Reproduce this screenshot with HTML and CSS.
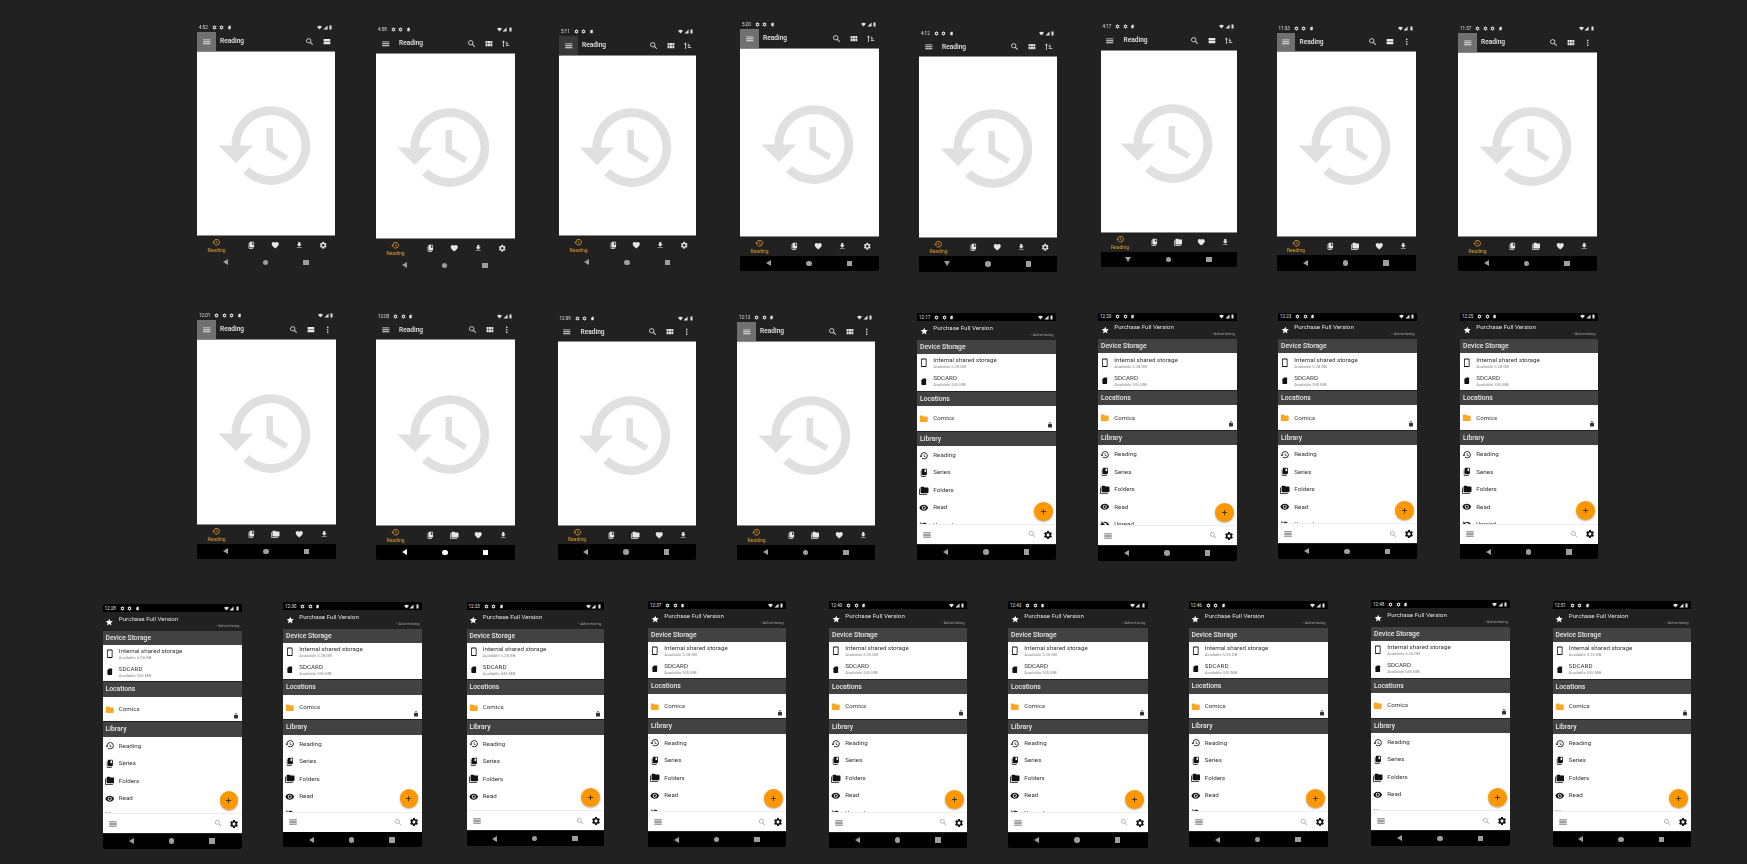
FILE: index.html
```html
<!DOCTYPE html>
<html lang="en">
<head>
  <meta charset="UTF-8">
  <title>App screens</title>
  <link rel="stylesheet" href="styles.css">
</head>
<body>

  <div class="board" id="board"></div>

  <script>
    const icons = {
      history: "M13 3c-4.97 0-9 4.03-9 9H1l3.89 3.89.07.14L9 12H6c0-3.87 3.13-7 7-7s7 3.13 7 7-3.13 7-7 7c-1.93 0-3.68-.79-4.94-2.06l-1.42 1.42C8.27 19.99 10.51 21 13 21c4.97 0 9-4.03 9-9s-4.03-9-9-9zm-1 5v5l4.28 2.54.72-1.21-3.5-2.08V8H12z",
      menu: "M3 18h18v-2H3v2zm0-5h18v-2H3v2zm0-7v2h18V6H3z",
      search: "M15.5 14h-.79l-.28-.27C15.41 12.59 16 11.11 16 9.5 16 5.91 13.09 3 9.5 3S3 5.91 3 9.5 5.91 16 9.5 16c1.61 0 3.09-.59 4.23-1.57l.27.28v.79l5 4.99L20.49 19l-4.99-5zm-6 0C7.01 14 5 11.99 5 9.5S7.01 5 9.5 5 14 7.01 14 9.5 11.99 14 9.5 14z",
      stream: "M4 18h17v-6H4v6zM4 5v6h17V5H4z",
      module: "M4 11h5V5H4v6zm0 7h5v-6H4v6zm6 0h5v-6h-5v6zm6 0h5v-6h-5v6zm-6-7h5V5h-5v6zm6-6v6h5V5h-5z",
      sort: "M6 4l3.5 4H7v12H5V8H2.500zM12 7h4v2h-4zM12 11h6v2h-6zM12 15h9v2h-9z",
      more: "M12 8c1.100 0 2-.9 2-2s-.9-2-2-2-2 .9-2 2 .9 2 2 2zm0 2c-1.100 0-2 .9-2 2s.9 2 2 2 2-.9 2-2-.9-2-2-2zm0 6c-1.100 0-2 .9-2 2s.9 2 2 2 2-.9 2-2-.9-2-2-2z",
      heart: "M12 21.350l-1.450-1.320C5.400 15.360 2 12.280 2 8.500 2 5.420 4.420 3 7.500 3c1.740 0 3.410.81 4.500 2.090C13.090 3.810 14.760 3 16.500 3 19.580 3 22 5.420 22 8.500c0 3.780-3.400 6.860-8.550 11.540L12 21.350z",
      download: "M19 9h-4V3H9v6H5l7 7 7-7zM5 18v2h14v-2H5z",
      gear: "M19.140 12.940c.04-.3.06-.61.06-.94 0-.32-.02-.64-.07-.94l2.030-1.580c.18-.14.23-.41.12-.61l-1.920-3.320c-.12-.22-.37-.29-.59-.22l-2.390.96c-.5-.38-1.030-.7-1.620-.94l-.36-2.540c-.04-.24-.24-.41-.48-.41h-3.840c-.24 0-.43.17-.47.41l-.36 2.540c-.59.24-1.130.57-1.620.94l-2.390-.96c-.22-.08-.47 0-.59.22L2.740 8.870c-.12.21-.08.47.12.61l2.030 1.580c-.05.3-.09.63-.09.94s.02.64.07.94l-2.030 1.580c-.18.14-.23.41-.12.61l1.920 3.320c.12.22.37.29.59.22l2.390-.96c.5.38 1.030.7 1.620.94l.36 2.540c.05.24.24.41.48.41h3.840c.24 0 .44-.17.47-.41l.36-2.540c.59-.24 1.130-.56 1.620-.94l2.390.96c.22.08.47 0 .59-.22l1.920-3.320c.12-.22.07-.47-.12-.61l-2.010-1.580zM12 15.600c-1.980 0-3.600-1.620-3.600-3.600s1.620-3.600 3.600-3.600 3.600 1.620 3.600 3.600-1.620 3.600-3.600 3.600z",
      book: "M6 6H4.500v14c0 1.100.9 2 2 2H17v-2H6V6zM18 2H9c-1.100 0-2 .9-2 2v12c0 1.100.9 2 2 2h9c1.100 0 2-.9 2-2V4c0-1.100-.9-2-2-2zm0 9l-2-1.200L14 11V4h4v7z",
      folders: "M2 6H0v5h.01L0 20c0 1.100.9 2 2 2h18v-2H2V6zm20-2h-8l-2-2H6c-1.100 0-1.990.9-1.990 2L4 16c0 1.100.9 2 2 2h16c1.100 0 2-.9 2-2V6c0-1.100-.9-2-2-2z",
      folder: "M10 4H4c-1.100 0-1.990.9-1.990 2L2 18c0 1.100.9 2 2 2h16c1.100 0 2-.9 2-2V8c0-1.100-.9-2-2-2h-8l-2-2z",
      eye: "M12 4.500C7 4.500 2.730 7.610 1 12c1.730 4.390 6 7.500 11 7.500s9.270-3.110 11-7.500c-1.730-4.390-6-7.500-11-7.500zM12 17c-2.760 0-5-2.240-5-5s2.240-5 5-5 5 2.240 5 5-2.240 5-5 5zm0-8c-1.660 0-3 1.340-3 3s1.340 3 3 3 3-1.340 3-3-1.340-3-3-3z",
      eyeoff: "M12 7c2.760 0 5 2.240 5 5 0 .65-.13 1.260-.36 1.830l2.920 2.920c1.510-1.260 2.700-2.890 3.430-4.750-1.730-4.390-6-7.500-11-7.500-1.400 0-2.740.25-3.980.7l2.160 2.160C10.740 7.130 11.350 7 12 7zM2 4.270l2.280 2.280.46.46C3.080 8.300 1.780 10.020 1 12c1.730 4.390 6 7.500 11 7.500 1.550 0 3.030-.3 4.380-.84l.42.42L19.730 22 21 20.730 3.270 3 2 4.270z",
      phone: "M17 1.010L7 1c-1.100 0-2 .9-2 2v18c0 1.100.9 2 2 2h10c1.100 0 2-.9 2-2V3c0-1.100-.9-1.990-2-1.990zM17 20H7V4h10v16z",
      sd: "M16.500 4H10L6 8.500V18.500c0 .8.7 1.500 1.500 1.500h9c.8 0 1.500-.7 1.500-1.500V5.500c0-.8-.7-1.500-1.500-1.500z",
      star: "M12 17.270L18.180 21l-1.640-7.030L22 9.240l-7.190-.61L12 2 9.190 8.630 2 9.240l5.460 4.730L5.820 21z",
      add: "M19 13h-6v6h-2v-6H5v-2h6V5h2v6h6v2z",
      lock: "M18 8h-1V6c0-2.760-2.240-5-5-5S7 3.240 7 6v2H6c-1.100 0-2 .9-2 2v10c0 1.100.9 2 2 2h12c1.100 0 2-.9 2-2V10c0-1.100-.9-2-2-2zm-2.900 0H8.900V6c0-1.710 1.390-3.100 3.100-3.100 1.710 0 3.100 1.390 3.100 3.100v2z",
      wifi: "M12 21L0 8c7-6 17-6 24 0z",
      signal: "M2 22h20V2z",
      battery: "M7 2h10v20H7z"
    };

    // x, y, width, height, clock, view icon, third icon, 5th tab layout, menu highlight, nav look
    const readingScreens = [
      [197, 23, 138, 247, "4:52", "stream", null, "old", "hi", "dark"],
      [376, 25, 138.500, 248, "4:58", "module", "sort", "old", "", "dark"],
      [559, 27, 137, 243, "5:11", "module", "sort", "old", "lo", "dark"],
      [740, 20, 139, 251, "5:20", "module", "sort", "old", "hi", "black"],
      [919, 28.500, 138, 243, "4:12", "module", "sort", "old", "", "black down"],
      [1100.500, 22, 136.500, 245, "4:17", "stream", "sort", "new", "", "black down"],
      [1276.500, 23.500, 139, 247, "11:53", "stream", "more", "new", "hi", "black"],
      [1458, 24, 138.500, 247, "11:57", "module", "more", "new", "hi", "black"],
      [197, 311, 139, 248, "12:01", "stream", "more", "new", "hi", "black"],
      [376, 311.500, 139, 248.500, "12:05", "module", "more", "new", "", "black bright"],
      [557.500, 313.500, 138, 246, "12:09", "module", "more", "new", "", "black"],
      [737, 313, 138, 247, "12:13", "module", "more", "new", "hi", "black"]
    ];

    // x, y, width, height, clock, free space
    const drawerScreens = [
      [917, 313.300, 139, 246.400, "12:17", "5.28"],
      [1098, 312.700, 139.200, 248, "12:20", "5.28"],
      [1278, 312.700, 139, 246.300, "12:23", "5.28"],
      [1460, 312.700, 138, 246.600, "12:25", "5.28"],
      [102.500, 604, 139.200, 244.700, "12:28", "5.28"],
      [283, 602, 138.800, 245.300, "12:30", "5.28"],
      [466.500, 602, 137, 244, "12:33", "5.28"],
      [648, 601, 138, 246, "12:37", "5.28"],
      [829, 601.300, 138, 246.400, "12:40", "5.26"],
      [1008, 601.300, 139.600, 246.400, "12:43", "5.26"],
      [1188.500, 601, 139.500, 246, "12:46", "5.26"],
      [1371, 600.300, 139.200, 245.700, "12:48", "5.26"],
      [1552.500, 601.300, 138.500, 245.700, "12:51", "5.26"]
    ];

    const icon = (name, cls) =>
      `<svg class="icon ${cls || ""}" viewBox="0 0 24 24"><path d="${icons[name]}"/></svg>`;

    const statusBar = (time, four) => `
      <div class="status">
        <span class="clock">${time}</span>
        ${icon("gear", "st")}${four ? icon("gear", "st") : ""}${icon("gear", "st")}${icon("sd", "st")}
        <span class="grow"></span>
        ${icon("wifi", "st-right")}${icon("signal", "st-right")}${icon("battery", "st-right")}
      </div>`;

    const navBar = `
      <div class="sysnav">
        <span class="nav-back"></span><span class="nav-home"></span><span class="nav-recent"></span>
      </div>`;

    const place = (s) => `left:${s[0]}px;top:${s[1]}px;width:${s[2]}px;height:${s[3]}px`;

    const readingHtml = (s) => {
      const tabs = s[7] === "old"
        ? ["book", "heart", "download", "gear"]
        : ["book", "folders", "heart", "download"];
      return `
      <div class="phone reading ${s[9]}" style="${place(s)}">
        ${statusBar(s[4], ["11:57", "12:01"].includes(s[4]))}
        <div class="appbar">
          <div class="menu-btn ${s[8]}">${icon("menu", "bar")}</div>
          <div class="title">Reading</div>
          <div class="btn">${icon("search", "bar")}</div>
          <div class="btn">${icon(s[5], "bar")}</div>
          ${s[6] ? `<div class="btn">${icon(s[6], "bar")}</div>` : ""}
        </div>
        <div class="empty">${icon("history", "big")}</div>
        <div class="tabs">
          <div class="tab active">${icon("history", "tab-icon")}<span>Reading</span></div>
          ${tabs.map(t => `<div class="tab">${icon(t, "tab-icon")}</div>`).join("")}
        </div>
        ${navBar}
      </div>`;
    };

    const libraryRows = [["history", "Reading"], ["book", "Series"], ["folders", "Folders"], ["eye", "Read"], ["eyeoff", "Unread"]];

    const drawerHtml = (s) => `
      <div class="phone drawer" style="${place(s)}">
        ${statusBar(s[4], false)}
        <div class="promo">
          ${icon("star", "promo-star")}
          <div class="promo-title">Purchase Full Version</div>
          <div class="promo-ad">- Advertising</div>
        </div>
        <div class="section">Device Storage</div>
        <div class="block storage">
          <div class="row two">${icon("phone", "row-icon")}<div><div class="row-title">Internal shared storage</div><div class="row-sub">Available ${s[5]} GB</div></div></div>
          <div class="row two">${icon("sd", "row-icon")}<div><div class="row-title">SDCARD</div><div class="row-sub">Available 535 MB</div></div></div>
        </div>
        <div class="section">Locations</div>
        <div class="block locations">
          <div class="row">${icon("folder", "row-icon orange")}<div class="row-title">Comics</div></div>
          ${icon("lock", "corner")}
        </div>
        <div class="section">Library</div>
        <div class="block library">
          ${libraryRows.map(r => `<div class="row lib">${icon(r[0], "row-icon")}<div class="row-title">${r[1]}</div></div>`).join("")}
          <div class="fab">${icon("add", "fab-icon")}</div>
        </div>
        <div class="toolbar">
          ${icon("menu", "tool menu-tool")}
          <span class="grow"></span>
          ${icon("search", "tool search-tool")}
          ${icon("gear", "tool")}
        </div>
        ${navBar}
      </div>`;

    document.getElementById("board").innerHTML =
      readingScreens.map(readingHtml).join("") + drawerScreens.map(drawerHtml).join("");
  </script>
</body>
</html>
```

FILE: styles.css
```css
html, body {
  margin: 0;
  padding: 0;
  background: #212121;
  height: 100%;
  overflow: hidden;
}

body {
  font-family: Roboto, "Liberation Sans", sans-serif;
}

.board {
  position: relative;
  width: 1747px;
  height: 864px;
}

.icon {
  display: block;
  flex: none;
  fill: currentColor;
}

.grow {
  flex: 1;
}

/* one screenshot on the board */
.phone {
  position: absolute;
  display: flex;
  flex-direction: column;
  background: #212121;
  border-radius: 2px;
  overflow: hidden;
  filter: blur(0.3px);
}

.status {
  flex: none;
  height: 9px;
  display: flex;
  align-items: center;
  gap: 2.500px;
  padding: 0 2px;
  color: #e0e0e0;
  font-size: 4.500px;
}

.clock {
  margin-right: 1.500px;
}

.st {
  width: 5px;
  height: 5px;
}

.st-right {
  width: 5px;
  height: 5px;
  margin-left: -2px;
}

.appbar {
  flex: none;
  height: 18.500px;
  display: flex;
  align-items: center;
  color: #e8e8e8;
}

.menu-btn {
  width: 18.500px;
  height: 100%;
  display: flex;
  align-items: center;
  justify-content: center;
}

.menu-btn.hi { background: #707070; }
.menu-btn.lo { background: #383838; }

.title {
  flex: 1;
  margin-left: 4.500px;
  font-size: 6.600px;
  font-weight: 500;
}

.btn {
  width: 17px;
  display: flex;
  justify-content: center;
}

.bar {
  width: 9.500px;
  height: 9.500px;
}

.empty {
  flex: 1;
  display: flex;
  align-items: center;
  justify-content: center;
  padding-top: 4px;
  background: #fff;
  border-top: 1px solid #8a8a8a;
  border-bottom: 1px solid #8a8a8a;
}

.big {
  width: 105px;
  height: 105px;
  color: #e0e0e0;
}

.tabs {
  flex: none;
  height: 18.500px;
  display: grid;
  grid-template-columns: 42px repeat(4, 1fr);
  align-items: center;
  justify-items: center;
  color: #e6e6e6;
}

.tab-icon {
  width: 8.500px;
  height: 8.500px;
}

.tab.active {
  display: flex;
  flex-direction: column;
  align-items: center;
  margin-right: 3px;
  color: #e09a2a;
  font-size: 5px;
  line-height: 6px;
}

.sysnav {
  flex: none;
  height: 15.500px;
  display: flex;
  align-items: center;
  justify-content: center;
  gap: 35px;
  padding-right: 1px;
  color: #9e9e9e;
}

.black .sysnav { background: #000; }
.bright .sysnav { color: #fff; }

.nav-back {
  flex: none;
  width: 0;
  height: 0;
  border-top: 3px solid transparent;
  border-bottom: 3px solid transparent;
  border-right: 5.500px solid currentColor;
}

.down .nav-back {
  border-top: 5.500px solid currentColor;
  border-bottom: 0;
  border-left: 3px solid transparent;
  border-right: 3px solid transparent;
}

.nav-home {
  flex: none;
  width: 5.500px;
  height: 5.500px;
  border-radius: 50%;
  background: currentColor;
}

.nav-recent {
  flex: none;
  width: 5.500px;
  height: 5.500px;
  background: currentColor;
}

/* drawer screens */
.drawer .status {
  height: 8px;
  background: #000;
}

.drawer .sysnav {
  height: 15px;
  margin-top: 0.700px;
  background: #000;
}

.promo {
  position: relative;
  flex: none;
  height: 18.500px;
  color: #e0e0e0;
}

.promo-star {
  position: absolute;
  left: 2.500px;
  top: 5.500px;
  width: 8.500px;
  height: 8.500px;
  color: #fff;
}

.promo-title {
  position: absolute;
  left: 16.300px;
  top: 2.500px;
  font-size: 6.200px;
}

.promo-ad {
  position: absolute;
  right: 2.300px;
  top: 10.500px;
  font-size: 4.200px;
  color: #9e9e9e;
}

.section {
  flex: none;
  height: 14.300px;
  line-height: 14.300px;
  padding-left: 3px;
  background: #424242;
  color: #e8e8e8;
  font-size: 6.800px;
  font-weight: 500;
}

.block {
  position: relative;
  flex: none;
  background: #fff;
  color: #333;
  margin-bottom: 1px;
}

.storage { height: 36.500px; }
.locations { height: 24.700px; }

.library {
  flex: 1;
  margin-bottom: 0;
  min-height: 0;
  padding-top: 0.700px;
  overflow: hidden;
}

.row {
  display: flex;
  align-items: center;
  height: 100%;
}

.row.two { height: 18.250px; }
.row.lib { height: 17.500px; flex: none; }

.row-icon {
  width: 9.500px;
  height: 9.500px;
  margin: 0 4.500px 0 2.300px;
  color: #111;
}

.row-icon.orange {
  color: #f9a825;
}

.locations .row {
  padding-top: 0.600px;
}

.row-title {
  font-size: 6.200px;
  line-height: 7px;
}

.row-sub {
  font-size: 4.200px;
  line-height: 5px;
  color: #8a8a8a;
}

.corner {
  position: absolute;
  right: 3px;
  bottom: 2.700px;
  width: 6px;
  height: 6px;
  color: #333;
}

.fab {
  position: absolute;
  right: 3.500px;
  bottom: 3.500px;
  width: 18.700px;
  height: 18.700px;
  display: flex;
  align-items: center;
  justify-content: center;
  border-radius: 50%;
  background: #ff9800;
  box-shadow: 0 1px 2px rgba(0, 0, 0, 0.3);
  color: #212121;
}

.fab-icon {
  width: 9px;
  height: 9px;
}

.toolbar {
  flex: none;
  height: 19px;
  display: flex;
  align-items: center;
  gap: 6.500px;
  padding: 0 3px 0 5px;
  background: #fff;
  border-top: 1px solid #eee;
  color: #111;
}

.tool {
  width: 10px;
  height: 10px;
}

.search-tool {
  color: #9e9e9e;
  width: 8.500px;
  height: 8.500px;
}

.menu-tool {
  color: #444;
}
```
